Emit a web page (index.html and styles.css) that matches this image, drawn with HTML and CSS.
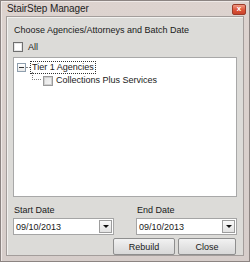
FILE: index.html
```html
<!DOCTYPE html>
<html>
<head>
<meta charset="utf-8">
<link rel="stylesheet" href="styles.css">
</head>
<body>
<div class="window">
  <div class="titlebar">
    <span class="title">StairStep Manager</span>
    <span class="close-btn">x</span>
  </div>
  <div class="client">
    <div class="heading">Choose Agencies/Attorneys and Batch Date</div>
    <label class="all-row"><span class="check"></span><span>All</span></label>
    <div class="tree">
      <div class="node root">
        <span class="expander"><span class="minus"></span></span>
        <span class="hline"></span>
        <span class="node-text focused">Tier 1 Agencies</span>
      </div>
      <div class="node child">
        <span class="elbow"></span>
        <span class="check small"></span>
        <span class="node-text">Collections Plus Services</span>
      </div>
    </div>
    <div class="dates">
      <div class="date-field">
        <div class="date-label">Start Date</div>
        <div class="date-input"><span class="date-value">09/10/2013</span><span class="drop"><span class="arrow"></span></span></div>
      </div>
      <div class="date-field">
        <div class="date-label">End Date</div>
        <div class="date-input"><span class="date-value">09/10/2013</span><span class="drop"><span class="arrow"></span></span></div>
      </div>
    </div>
    <div class="buttons">
      <button class="btn rebuild">Rebuild</button>
      <button class="btn close">Close</button>
    </div>
  </div>
</div>
</body>
</html>
```
FILE: styles.css
```css
* { box-sizing: border-box; }
html, body { margin: 0; padding: 0; }
body {
  width: 250px;
  height: 262px;
  overflow: hidden;
  font-family: "Liberation Sans", Arial, sans-serif;
  font-size: 9px;
  color: #1a1a1a;
  background: #cfc7c4;
}
.window {
  width: 250px;
  height: 262px;
  background: linear-gradient(#ddd3cf, #d6cdca);
  border: 1px solid #8c8482;
  display: flex;
  flex-direction: column;
  padding: 0 5px 6px 5px;
  box-shadow: inset 1px 1px 0 #efe9e7;
}
.titlebar {
  height: 15px;
  display: flex;
  align-items: center;
  justify-content: space-between;
  padding-left: 1px;
  position: relative;
}
.title {
  font-size: 10px;
  color: #1e1e1e;
  letter-spacing: -0.1px;
  margin-top: 1px;
}
.close-btn {
  width: 14px;
  height: 11px;
  margin-top: 3px;
  margin-right: -2px;
  border: 1px solid #9b3b2a;
  border-radius: 2px;
  background: linear-gradient(#f09a85, #dd553a 55%, #c9432b);
  color: #fff;
  font-size: 8px;
  font-weight: bold;
  line-height: 8px;
  text-align: center;
}
.client {
  flex: 1;
  margin-top: 1px;
  background: #dcdbd8;
  border: 1px solid #a39d9b;
  box-shadow: inset 1px 1px 0 #f2f1ef;
  padding: 5px 6px 0 6px;
  display: flex;
  flex-direction: column;
}
.heading {
  height: 12px;
  line-height: 12px;
  margin-top: 2px;
  margin-left: 1px;
}
.all-row {
  display: flex;
  align-items: center;
  gap: 5px;
  height: 10px;
  margin-top: 6px;
}
.check {
  width: 10px;
  height: 10px;
  border: 1px solid #707070;
  background: #fff;
  box-shadow: inset 0 0 0 1px #e6e6e6;
  display: inline-block;
  flex: none;
}
.tree {
  height: 140px;
  margin-top: 5px;
  background: #fff;
  border: 1px solid #a8a8a8;
  padding: 3px 0 0 3px;
  position: relative;
}
.node {
  display: flex;
  align-items: center;
  height: 13px;
}
.expander {
  width: 9px;
  height: 9px;
  border: 1px solid #8f9fae;
  background: linear-gradient(#fff, #e8e8e8);
  display: flex;
  align-items: center;
  justify-content: center;
  flex: none;
}
.minus {
  width: 5px;
  height: 1px;
  background: #333;
}
.hline {
  width: 4px;
  border-top: 1px dotted #808080;
}
.node-text {
  padding: 0 1px;
  line-height: 11px;
  white-space: nowrap;
}
.focused {
  border: 1px dotted #333;
}
.child {
  margin-top: 0;
  padding-left: 17px;
  position: relative;
}
.elbow {
  position: absolute;
  left: 15px;
  top: -2px;
  width: 9px;
  height: 8px;
  border-left: 1px dotted #808080;
  border-bottom: 1px dotted #808080;
}
.child .check {
  margin-left: 9px;
  width: 10px;
  height: 10px;
  border-color: #9a9a9a;
  background: linear-gradient(135deg, #e4e4e4, #f6f6f6);
  box-shadow: inset 0 0 0 1px #cfcfcf;
  margin-right: 2px;
}
.dates {
  display: grid;
  grid-template-columns: 101px 101px;
  column-gap: 22px;
  margin-top: 8px;
}
.date-label {
  height: 11px;
  line-height: 11px;
  margin-left: 1px;
}
.date-input {
  margin-top: 2px;
  height: 17px;
  background: #fff;
  border: 1px solid #a5a5a5;
  display: flex;
  align-items: center;
  justify-content: space-between;
  padding: 0 1px 0 2px;
}
.date-value {
  font-size: 9px;
}
.drop {
  width: 13px;
  height: 13px;
  border: 1px solid #9d9d9d;
  background: linear-gradient(#fafafa, #e2e2e2);
  display: flex;
  align-items: center;
  justify-content: center;
}
.arrow {
  width: 0;
  height: 0;
  border-left: 3px solid transparent;
  border-right: 3px solid transparent;
  border-top: 3px solid #111;
}
.buttons {
  display: flex;
  justify-content: flex-end;
  gap: 3px;
  margin-top: 3px;
  padding-right: 1px;
}
.btn {
  font-family: "Liberation Sans", Arial, sans-serif;
  font-size: 9px;
  color: #1a1a1a;
  height: 17px;
  border: 1px solid #8e8e8e;
  border-radius: 2px;
  background: linear-gradient(#f2f2f2, #e4e4e4 50%, #d8d8d8);
  padding: 0;
}
.rebuild { width: 62px; }
.close { width: 58px; }
```
